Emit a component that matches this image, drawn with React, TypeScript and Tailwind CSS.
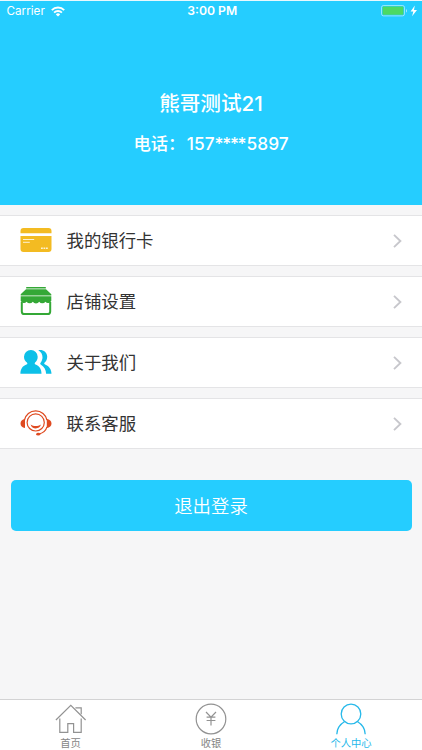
import type { ReactNode } from 'react';

interface MenuItem {
  label: string;
  icon: ReactNode;
}

interface TabItem {
  label: string;
  icon: ReactNode;
  active?: boolean;
}

function WifiIcon() {
  return (
    <svg width="14" height="11" viewBox="0 0 14 11" fill="none" stroke="#fff" strokeWidth="1.9">
      <path d="M0.8 4.1a8.8 8.8 0 0 1 12.4 0" />
      <path d="M3.1 6.6a5.5 5.5 0 0 1 7.8 0" />
      <path d="M7 10.6 4.8 8.4a3.1 3.1 0 0 1 4.4 0z" fill="#fff" stroke="none" />
    </svg>
  );
}

function BatteryIcon() {
  return (
    <svg width="37" height="12" viewBox="0 0 37 12">
      <rect x="0.5" y="0.5" width="23" height="10.4" rx="2" fill="none" stroke="#fff" strokeOpacity="0.5" />
      <rect x="1.6" y="1.6" width="20.8" height="8.2" rx="0.8" fill="#4cd964" />
      <path d="M25 4v3.6c1.3-.4 1.3-3.2 0-3.6z" fill="#fff" fillOpacity="0.6" />
      <path d="M33.8.6 29.6 6.4h2.7l-1.2 4.9 4.9-6.3h-3z" fill="#fff" />
    </svg>
  );
}

function CardIcon() {
  return (
    <svg width="32" height="26" viewBox="0 0 32 26">
      <path d="M.5 5.2V3a3 3 0 0 1 3-3h25a3 3 0 0 1 3 3v2.2z" fill="#f3bb22" />
      <path d="M.5 8.1h31v13a3 3 0 0 1-3 3h-25a3 3 0 0 1-3-3z" fill="#f3bb22" />
      <path d="M3 11.5h11.2M3 14.3h6.8" stroke="#fff" strokeOpacity="0.8" />
      <path d="M21 20.2h7" stroke="#fff" strokeOpacity="0.8" strokeWidth="1.4" strokeDasharray="1.8 .7" />
    </svg>
  );
}

function ShopIcon() {
  return (
    <svg width="32" height="30" viewBox="0 0 32 30" fill="#34a836">
      <path d="M6.2 0h19.6v1.5H6.2z" />
      <path d="M6 2.3h20l5.3 5v1.1H.7V7.3z" />
      <path d="M.7 9.3h30.6v4.5a3 3 0 0 1-1.6 1.6 3.4 3.4 0 0 1-4.3-.7 3.8 3.8 0 0 1-6.2 0 3.8 3.8 0 0 1-6.4 0 3.8 3.8 0 0 1-6.2 0 3.4 3.4 0 0 1-4.3.7 3 3 0 0 1-1.6-1.6z" />
      <path d="M1.8 15v9.4A2.6 2.6 0 0 0 4.4 27h23.2a2.6 2.6 0 0 0 2.6-2.6V15" fill="none" stroke="#34a836" strokeWidth="2" />
    </svg>
  );
}

function PeopleIcon() {
  return (
    <svg width="32" height="26" viewBox="0 0 32 26" fill="#0dc0e8">
      <path d="M10.8 0a6.8 6.8 0 0 1 6.9 6.8c0 2.7-1.2 4.6-2.6 5.8-.7.7-.4 1.7.6 2 4 1.6 5.7 4.7 5.8 9.2H.4c.1-4.6 2-7.7 6-9.2 1-.3 1.3-1.3.5-2-1.6-1.2-2.9-3.1-2.9-5.8A6.8 6.8 0 0 1 10.8 0z" />
      <path d="M18.3.3c4.7-1 8.6 1.9 8.9 6.2.1 2.8-1 4.8-2.5 6.1-.8.7-.6 1.6.4 2 4.2 1.8 6.2 4.8 6.4 9.2h-5.4c-.1-4-1.9-7.2-5.1-9.1-.9-.6-1-1.2-.4-1.9 3-3.9 2.6-9.7-2.3-12.5z" />
    </svg>
  );
}

function ServiceIcon() {
  return (
    <svg width="32" height="28" viewBox="0 0 32 28" fill="none" stroke="#df4a20">
      <path d="M4.4 10.2a11.5 11.5 0 0 1 22.6 0" strokeWidth="1.3" />
      <circle cx="15.7" cy="12.4" r="8.6" strokeWidth="1.2" />
      <path d="M5 9v8.9C2.2 17.8.5 15.9.5 13.5S2.2 9.2 5 9zM26.8 9v8.9c2.9-.1 4.7-2 4.7-4.4S29.7 9.2 26.8 9z" fill="#df4a20" stroke="none" />
      <path d="M10.6 14.6c3.1 2 7.1 2 10.3 0-1 5-9.1 5.3-10.3 0z" fill="#df4a20" stroke="none" />
      <path d="M27 16.8c-1 3.5-3.9 6-7.8 7.2" strokeWidth="1.2" />
      <ellipse cx="18.2" cy="24.2" rx="2" ry="1.4" fill="#df4a20" stroke="none" />
    </svg>
  );
}

function ChevronIcon() {
  return (
    <svg width="9" height="14" viewBox="0 0 9 14" fill="none" stroke="#c7c7cc" strokeWidth="1.9">
      <path d="M1 .9 7.4 7 1 13.1" />
    </svg>
  );
}

function HomeIcon() {
  return (
    <svg width="32" height="32" viewBox="0 0 32 32" fill="none" stroke="#929292" strokeWidth="1.2">
      <path d="M.9 17 15.8 2.3 30.6 17" />
      <path d="M4.8 15.5v13.8h8v-8.7h5.8v8.7h7.6V15.5" />
      <path d="M20.4 4.8h5.8v6.4" />
    </svg>
  );
}

function YuanIcon() {
  return (
    <svg width="32" height="32" viewBox="0 0 32 32" fill="none" stroke="#929292" strokeWidth="1.2">
      <circle cx="16" cy="16" r="14.8" />
      <path d="m11 9 5 5.2L21 9M16 14.2v8.4M11.6 14.2h8.8M11.6 17.5h8.8" />
    </svg>
  );
}

function UserIcon() {
  return (
    <svg width="32" height="32" viewBox="0 0 32 32" fill="none" stroke="#27b9ea" strokeWidth="1.3">
      <circle cx="16" cy="11" r="9.8" />
      <path d="M1.8 31.2c.1-5.3 3-9.8 7.9-12.7M30.2 31.2c-.1-5.3-3-9.8-7.9-12.7" />
    </svg>
  );
}

const menuItems: MenuItem[] = [
  { label: '我的银行卡', icon: <CardIcon /> },
  { label: '店铺设置', icon: <ShopIcon /> },
  { label: '关于我们', icon: <PeopleIcon /> },
  { label: '联系客服', icon: <ServiceIcon /> },
];

const tabs: TabItem[] = [
  { label: '首页', icon: <HomeIcon /> },
  { label: '收银', icon: <YuanIcon /> },
  { label: '个人中心', icon: <UserIcon />, active: true },
];

function StatusBar() {
  return (
    <div className="flex h-5 items-center pr-1 pl-[6.5px] text-[11.7px] leading-5">
      <div className="flex flex-1 items-center gap-[6px]">
        <span>Carrier</span>
        <WifiIcon />
      </div>
      <span className="text-center text-[12.2px] font-semibold">3:00 PM</span>
      <div className="flex flex-1 justify-end">
        <BatteryIcon />
      </div>
    </div>
  );
}

function MenuRow({ item }: { item: MenuItem }) {
  return (
    <button className="flex h-[51px] w-full items-center border-y border-[#e4e4e6] bg-white pr-5 pl-5 text-left">
      <span className="flex w-8 justify-center">{item.icon}</span>
      <span className="ml-[14.5px] flex-1 text-[17.4px] leading-6 text-[#333]">{item.label}</span>
      <ChevronIcon />
    </button>
  );
}

export default function App() {
  return (
    <div className="flex h-[750px] w-[422px] flex-col bg-[#f6f6f7] font-['Inter','Noto_Sans_CJK_SC',sans-serif]">
      <header className="h-[205px] border-t border-[#e9f8fd] bg-[#25cdff] text-white">
        <StatusBar />
        <div className="flex flex-col items-center pt-[68px] font-medium">
          <h1 className="text-[20.6px] leading-[30px]">熊哥测试21</h1>
          <p className="mt-3 flex text-[17.3px] leading-[26px]">
            <span>电话：</span>
            <span className="ml-[1.5px]">157</span>
            <span className="tracking-[-1.3px]">****</span>
            <span className="ml-[1.3px]">5897</span>
          </p>
        </div>
      </header>

      <main className="flex-1 pt-[10px]">
        <div className="flex flex-col gap-[10.1px]">
          {menuItems.map((item) => (
            <MenuRow key={item.label} item={item} />
          ))}
        </div>
        <div className="px-[10.5px] pt-[30.7px]">
          <button className="h-[51px] w-full rounded-[5px] bg-[#25cdff] pt-[2px] text-[18.4px] font-[350] text-white">
            退出登录
          </button>
        </div>
      </main>

      <nav className="grid h-[51px] grid-cols-[141px_140px_141px] border-t border-[#d3d3d4] bg-white">
        {tabs.map((tab) => (
          <div
            key={tab.label}
            className={`flex flex-col items-center pt-[3px] text-[10.3px] leading-4 ${
              tab.active ? 'pr-px text-[#27b9ea]' : 'text-[#858585]'
            }`}
          >
            {tab.icon}
            <span>{tab.label}</span>
          </div>
        ))}
      </nav>
    </div>
  );
}
